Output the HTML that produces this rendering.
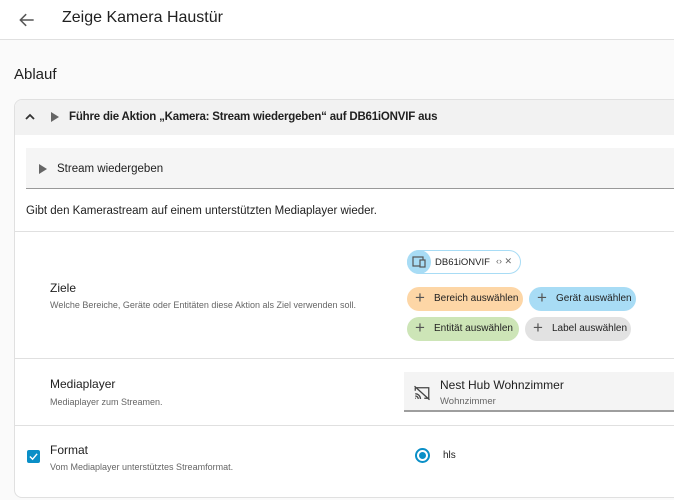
<!DOCTYPE html>
<html><head><meta charset="utf-8"><style>
*{box-sizing:border-box;margin:0;padding:0}
body{width:674px;height:500px;overflow:hidden;background:#fafafa;font-family:"Liberation Sans",sans-serif;color:#212121;position:relative}
.a{position:absolute;white-space:nowrap}
.top{left:0;top:0;width:674px;height:40px;background:#fff;border-bottom:1px solid #e0e0e0}
.card{left:14px;top:99px;width:680px;height:399px;background:#fff;border:1px solid #e0e0e0;border-radius:8px;overflow:hidden}
.chip{position:absolute;white-space:nowrap;height:24px;border-radius:12px;font-size:10px;line-height:24px;padding-left:27px;color:#222}
.chip:before{content:"+";position:absolute;left:8px;top:-1px;font-size:17px;color:#555}
.hr{position:absolute;left:0;width:680px;height:1px;background:#e0e0e0}
</style></head><body>
<div class="a top">
<svg class="a" style="left:17px;top:10px" width="20" height="20" viewBox="0 0 24 24"><path d="M20 12H5M11 5l-7 7 7 7" fill="none" stroke="#555" stroke-width="1.8"/></svg>
<div class="a" style="left:62px;top:9px;font-size:16px">Zeige Kamera Haustür</div>
</div>
<div class="a" style="left:14px;top:66px;font-size:15px">Ablauf</div>
<div class="a card">
 <div class="a" style="left:0;top:0;width:680px;height:35px;background:#f2f2f2"></div>
 <svg class="a" style="left:10px;top:13px" width="10" height="8" viewBox="0 0 10 8"><path d="M1 6l4-4 4 4" fill="none" stroke="#333" stroke-width="1.8"/></svg>
 <div class="a" style="left:36px;top:12px;width:0;height:0;border-left:8px solid #666;border-top:5px solid transparent;border-bottom:5px solid transparent"></div>
 <div class="a" style="left:54px;top:11px;font-size:11.5px;font-weight:bold;letter-spacing:-0.2px">Führe die Aktion „Kamera: Stream wiedergeben“ auf DB61iONVIF aus</div>
 <div class="a" style="left:11px;top:48px;width:670px;height:41px;background:#f5f5f5;border-bottom:1px solid #999"></div>
 <div class="a" style="left:24px;top:64px;width:0;height:0;border-left:8px solid #666;border-top:5px solid transparent;border-bottom:5px solid transparent"></div>
 <div class="a" style="left:42px;top:63px;font-size:11.5px">Stream wiedergeben</div>
 <div class="a" style="left:11px;top:105px;font-size:11.5px">Gibt den Kamerastream auf einem unterstützten Mediaplayer wieder.</div>
 <div class="hr" style="top:131px"></div>
 <div class="a" style="left:35px;top:181px;font-size:12px">Ziele</div>
 <div class="a" style="left:35px;top:200px;font-size:9px;color:#666">Welche Bereiche, Geräte oder Entitäten diese Aktion als Ziel verwenden soll.</div>
 <div class="a" style="left:392px;top:150px;width:114px;height:24px;border:1px solid #a8dcf5;border-radius:12px;background:#fff"></div>
 <div class="a" style="left:392px;top:150px;width:24px;height:24px;border-radius:12px;background:#a8dcf5"></div>
 <svg class="a" style="left:397px;top:156px" width="14" height="12" viewBox="0 0 14 12"><rect x="1" y="1" width="10" height="9" fill="none" stroke="#555" stroke-width="1.2"/><rect x="8" y="4" width="5" height="7" fill="#a8dcf5" stroke="#555" stroke-width="1.2"/></svg>
 <div class="a" style="left:420px;top:157px;font-size:9.5px">DB61iONVIF</div>
 <div class="a" style="left:481px;top:156px;font-size:9px;color:#666">‹› ✕</div>
 <div class="chip" style="left:392px;top:187px;width:116px;background:#fdd6a6">Bereich auswählen</div>
 <div class="chip" style="left:514px;top:187px;width:107px;background:#a8dcf5">Gerät auswählen</div>
 <div class="chip" style="left:392px;top:217px;width:112px;background:#cde5b7">Entität auswählen</div>
 <div class="chip" style="left:510px;top:217px;width:106px;background:#e2e2e2">Label auswählen</div>
 <div class="hr" style="top:258px"></div>
 <div class="a" style="left:35px;top:277px;font-size:12px">Mediaplayer</div>
 <div class="a" style="left:35px;top:297px;font-size:9px;color:#666">Mediaplayer zum Streamen.</div>
 <div class="a" style="left:389px;top:272px;width:290px;height:40px;background:#f4f4f4;border-bottom:2px solid #9e9e9e"></div>
 <svg class="a" style="left:398px;top:284px" width="18" height="18" viewBox="0 0 24 24"><path d="M3 5h18v14h-6M3 9v-4M2 3l20 18M3 13a7 7 0 017 7M3 16a4 4 0 014 4M3 19h1" fill="none" stroke="#444" stroke-width="1.7"/></svg>
 <div class="a" style="left:425px;top:278px;font-size:12px">Nest Hub Wohnzimmer</div>
 <div class="a" style="left:425px;top:296px;font-size:9.5px;color:#666">Wohnzimmer</div>
 <div class="hr" style="top:325px"></div>
 <div class="a" style="left:12px;top:350px;width:13px;height:13px;background:#0a8fc7;border-radius:2px"></div>
 <svg class="a" style="left:14px;top:352px" width="9" height="9" viewBox="0 0 10 10"><path d="M1 5l3 3 5-6" fill="none" stroke="#fff" stroke-width="1.6"/></svg>
 <div class="a" style="left:35px;top:343px;font-size:12px">Format</div>
 <div class="a" style="left:35px;top:362px;font-size:9px;color:#666">Vom Mediaplayer unterstütztes Streamformat.</div>
 <div class="a" style="left:400px;top:348px;width:15px;height:15px;border:2px solid #0a8fc7;border-radius:50%"></div>
 <div class="a" style="left:404px;top:352px;width:7px;height:7px;background:#0a8fc7;border-radius:50%"></div>
 <div class="a" style="left:428px;top:350px;font-size:10px">hls</div>
</div>
</body></html>
